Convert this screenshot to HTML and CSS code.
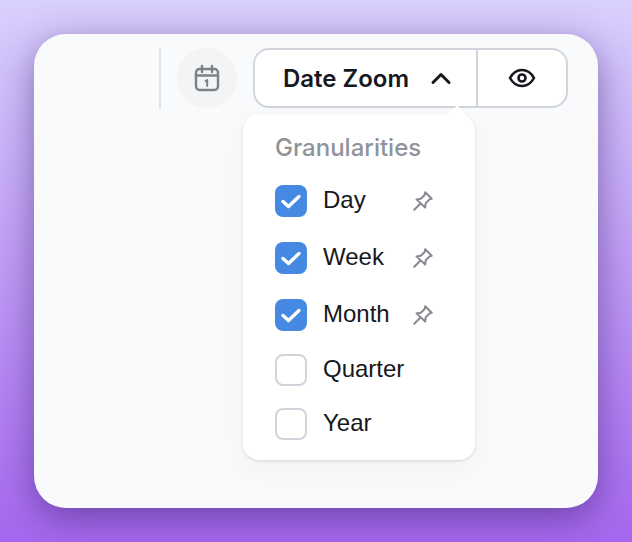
FILE: index.html
```html
<!DOCTYPE html>
<html lang="en">
<head>
    <meta charset="UTF-8">
    <title>Date Zoom</title>
    <link rel="stylesheet" href="styles.css">
</head>
<body>
    <div class="card">
        <div class="toolbar">
            <div class="divider"></div>
            <div class="icon-circle">
                <svg width="30" height="30" viewBox="0 0 30 30" fill="none" stroke="#7c8087" stroke-width="2.4" stroke-linecap="round" stroke-linejoin="round">
                    <rect x="4" y="6" width="22" height="21" rx="3.5"/>
                    <path d="M4 12.5h22M10 3v6M20 3v6"/>
                    <path d="M13.6 18l1.6-1v6" stroke-width="2"/>
                </svg>
            </div>
            <div class="btn-group">
                <button class="btn-main">
                    <span>Date Zoom</span>
                    <svg width="24" height="24" viewBox="0 0 24 24" fill="none" stroke="#16181d" stroke-width="3" stroke-linecap="round" stroke-linejoin="round">
                        <path d="M4 16.5l8-8 8 8"/>
                    </svg>
                </button>
                <button class="btn-eye">
                    <svg width="30" height="30" viewBox="0 0 30 30" fill="none" stroke="#16181d" stroke-width="2.6" stroke-linecap="round" stroke-linejoin="round">
                        <path d="M3 15c3-5.500 7-8 12-8s9 2.500 12 8c-3 5.500-7 8-12 8s-9-2.500-12-8z"/>
                        <circle cx="15" cy="15" r="3.500"/>
                    </svg>
                </button>
            </div>
        </div>

        <div class="popover">
            <div class="popover-arrow"></div>
            <div class="popover-title">Granularities</div>
            <div class="option pinned">
                <span class="check checked">
                    <svg width="32" height="32" viewBox="0 0 32 32" fill="none" stroke="#fff" stroke-width="3.4" stroke-linecap="round" stroke-linejoin="round"><path d="M8 16.500l5.500 5L24 11.500"/></svg>
                </span>
                <span class="option-label">Day</span>
                <svg class="pin" width="24" height="24" viewBox="0 0 22 22" fill="none" stroke="#85898f" stroke-width="1.800" stroke-linecap="round" stroke-linejoin="round"><path d="M13 3l6 6-2 .5-3.500 3.500-.5 4L5 9.500l4-.5 3.500-3.500zM8.500 13.500L3 19"/></svg>
            </div>
            <div class="option pinned">
                <span class="check checked">
                    <svg width="32" height="32" viewBox="0 0 32 32" fill="none" stroke="#fff" stroke-width="3.4" stroke-linecap="round" stroke-linejoin="round"><path d="M8 16.500l5.500 5L24 11.500"/></svg>
                </span>
                <span class="option-label">Week</span>
                <svg class="pin" width="24" height="24" viewBox="0 0 22 22" fill="none" stroke="#85898f" stroke-width="1.800" stroke-linecap="round" stroke-linejoin="round"><path d="M13 3l6 6-2 .5-3.500 3.500-.5 4L5 9.500l4-.5 3.500-3.500zM8.500 13.500L3 19"/></svg>
            </div>
            <div class="option pinned last-pinned">
                <span class="check checked">
                    <svg width="32" height="32" viewBox="0 0 32 32" fill="none" stroke="#fff" stroke-width="3.4" stroke-linecap="round" stroke-linejoin="round"><path d="M8 16.500l5.500 5L24 11.500"/></svg>
                </span>
                <span class="option-label">Month</span>
                <svg class="pin" width="24" height="24" viewBox="0 0 22 22" fill="none" stroke="#85898f" stroke-width="1.800" stroke-linecap="round" stroke-linejoin="round"><path d="M13 3l6 6-2 .5-3.500 3.500-.5 4L5 9.500l4-.5 3.500-3.500zM8.500 13.500L3 19"/></svg>
            </div>
            <div class="option">
                <span class="check"></span>
                <span class="option-label">Quarter</span>
            </div>
            <div class="option">
                <span class="check"></span>
                <span class="option-label">Year</span>
            </div>
        </div>
    </div>
</body>
</html>
```

FILE: styles.css
```css
html, body {
  height: 100%;
}

body {
  margin: 0;
  padding: 34px 34px 0;
  box-sizing: border-box;
  font-family: Inter, "Liberation Sans", sans-serif;
  color: #16181d;
  background: linear-gradient(to bottom, #d9d0fd, #a667ef);
  overflow: hidden;
}

.card {
  position: relative;
  width: 564px;
  height: 474px;
  background-color: #f9fafb;
  border-radius: 32px;
  box-shadow: 0 10px 36px rgba(50, 25, 100, 0.5);
}

.toolbar {
  display: flex;
  justify-content: flex-end;
  align-items: center;
  gap: 16px;
  padding: 14px 30px 0 0;
}

.divider {
  width: 2px;
  height: 60px;
  background-color: #dfe2e6;
}

.icon-circle {
  width: 60px;
  height: 60px;
  border-radius: 50%;
  background-color: #f3f4f6;
  display: flex;
  align-items: center;
  justify-content: center;
}

.btn-group {
  display: flex;
  height: 60px;
  box-sizing: border-box;
  border: 2px solid #d1d5db;
  border-radius: 16px;
  background-color: #fff;
  overflow: hidden;
}

.btn-group button {
  border: none;
  background: none;
  padding: 0;
  display: flex;
  align-items: center;
  font-family: inherit;
  color: inherit;
}

.btn-main {
  width: 223px;
  padding-left: 28px !important;
  gap: 20px;
  font-size: 24px;
  font-weight: 600;
  border-right: 2px solid #d1d5db !important;
}

.btn-eye {
  width: 88px;
  justify-content: center;
}

.popover {
  position: absolute;
  left: 209px;
  top: 80px;
  width: 232px;
  height: 346px;
  box-sizing: border-box;
  padding: 17px 32px 0;
  background-color: #fff;
  border-radius: 16px;
  box-shadow: 0 1px 3px rgba(0, 0, 0, 0.13), 0 10px 30px rgba(0, 0, 0, 0.04);
}

.popover-arrow {
  position: absolute;
  top: -6px;
  right: 12px;
  width: 12px;
  height: 12px;
  background-color: #fff;
  transform: rotate(45deg);
}

.popover-title {
  font-size: 24px;
  font-weight: 500;
  line-height: 34px;
  color: #8f939a;
  margin-bottom: 20px;
}

.option {
  display: flex;
  align-items: center;
  gap: 16px;
  height: 32px;
  margin-bottom: 22px;
  font-family: "Liberation Sans", Arial, sans-serif;
  font-size: 24px;
}

.option.pinned {
  margin-bottom: 25px;
}

.option.last-pinned {
  margin-bottom: 23px;
}

.check {
  width: 32px;
  height: 32px;
  box-sizing: border-box;
  border: 2px solid #d1d5db;
  border-radius: 8px;
  background-color: #fff;
  flex-shrink: 0;
}

.check.checked {
  border: none;
  background-color: #4689e2;
}

.check svg {
  display: block;
}

.option-label {
  flex: 1;
  position: relative;
  top: -1px;
}

.pin {
  margin-right: 8px;
}
```
